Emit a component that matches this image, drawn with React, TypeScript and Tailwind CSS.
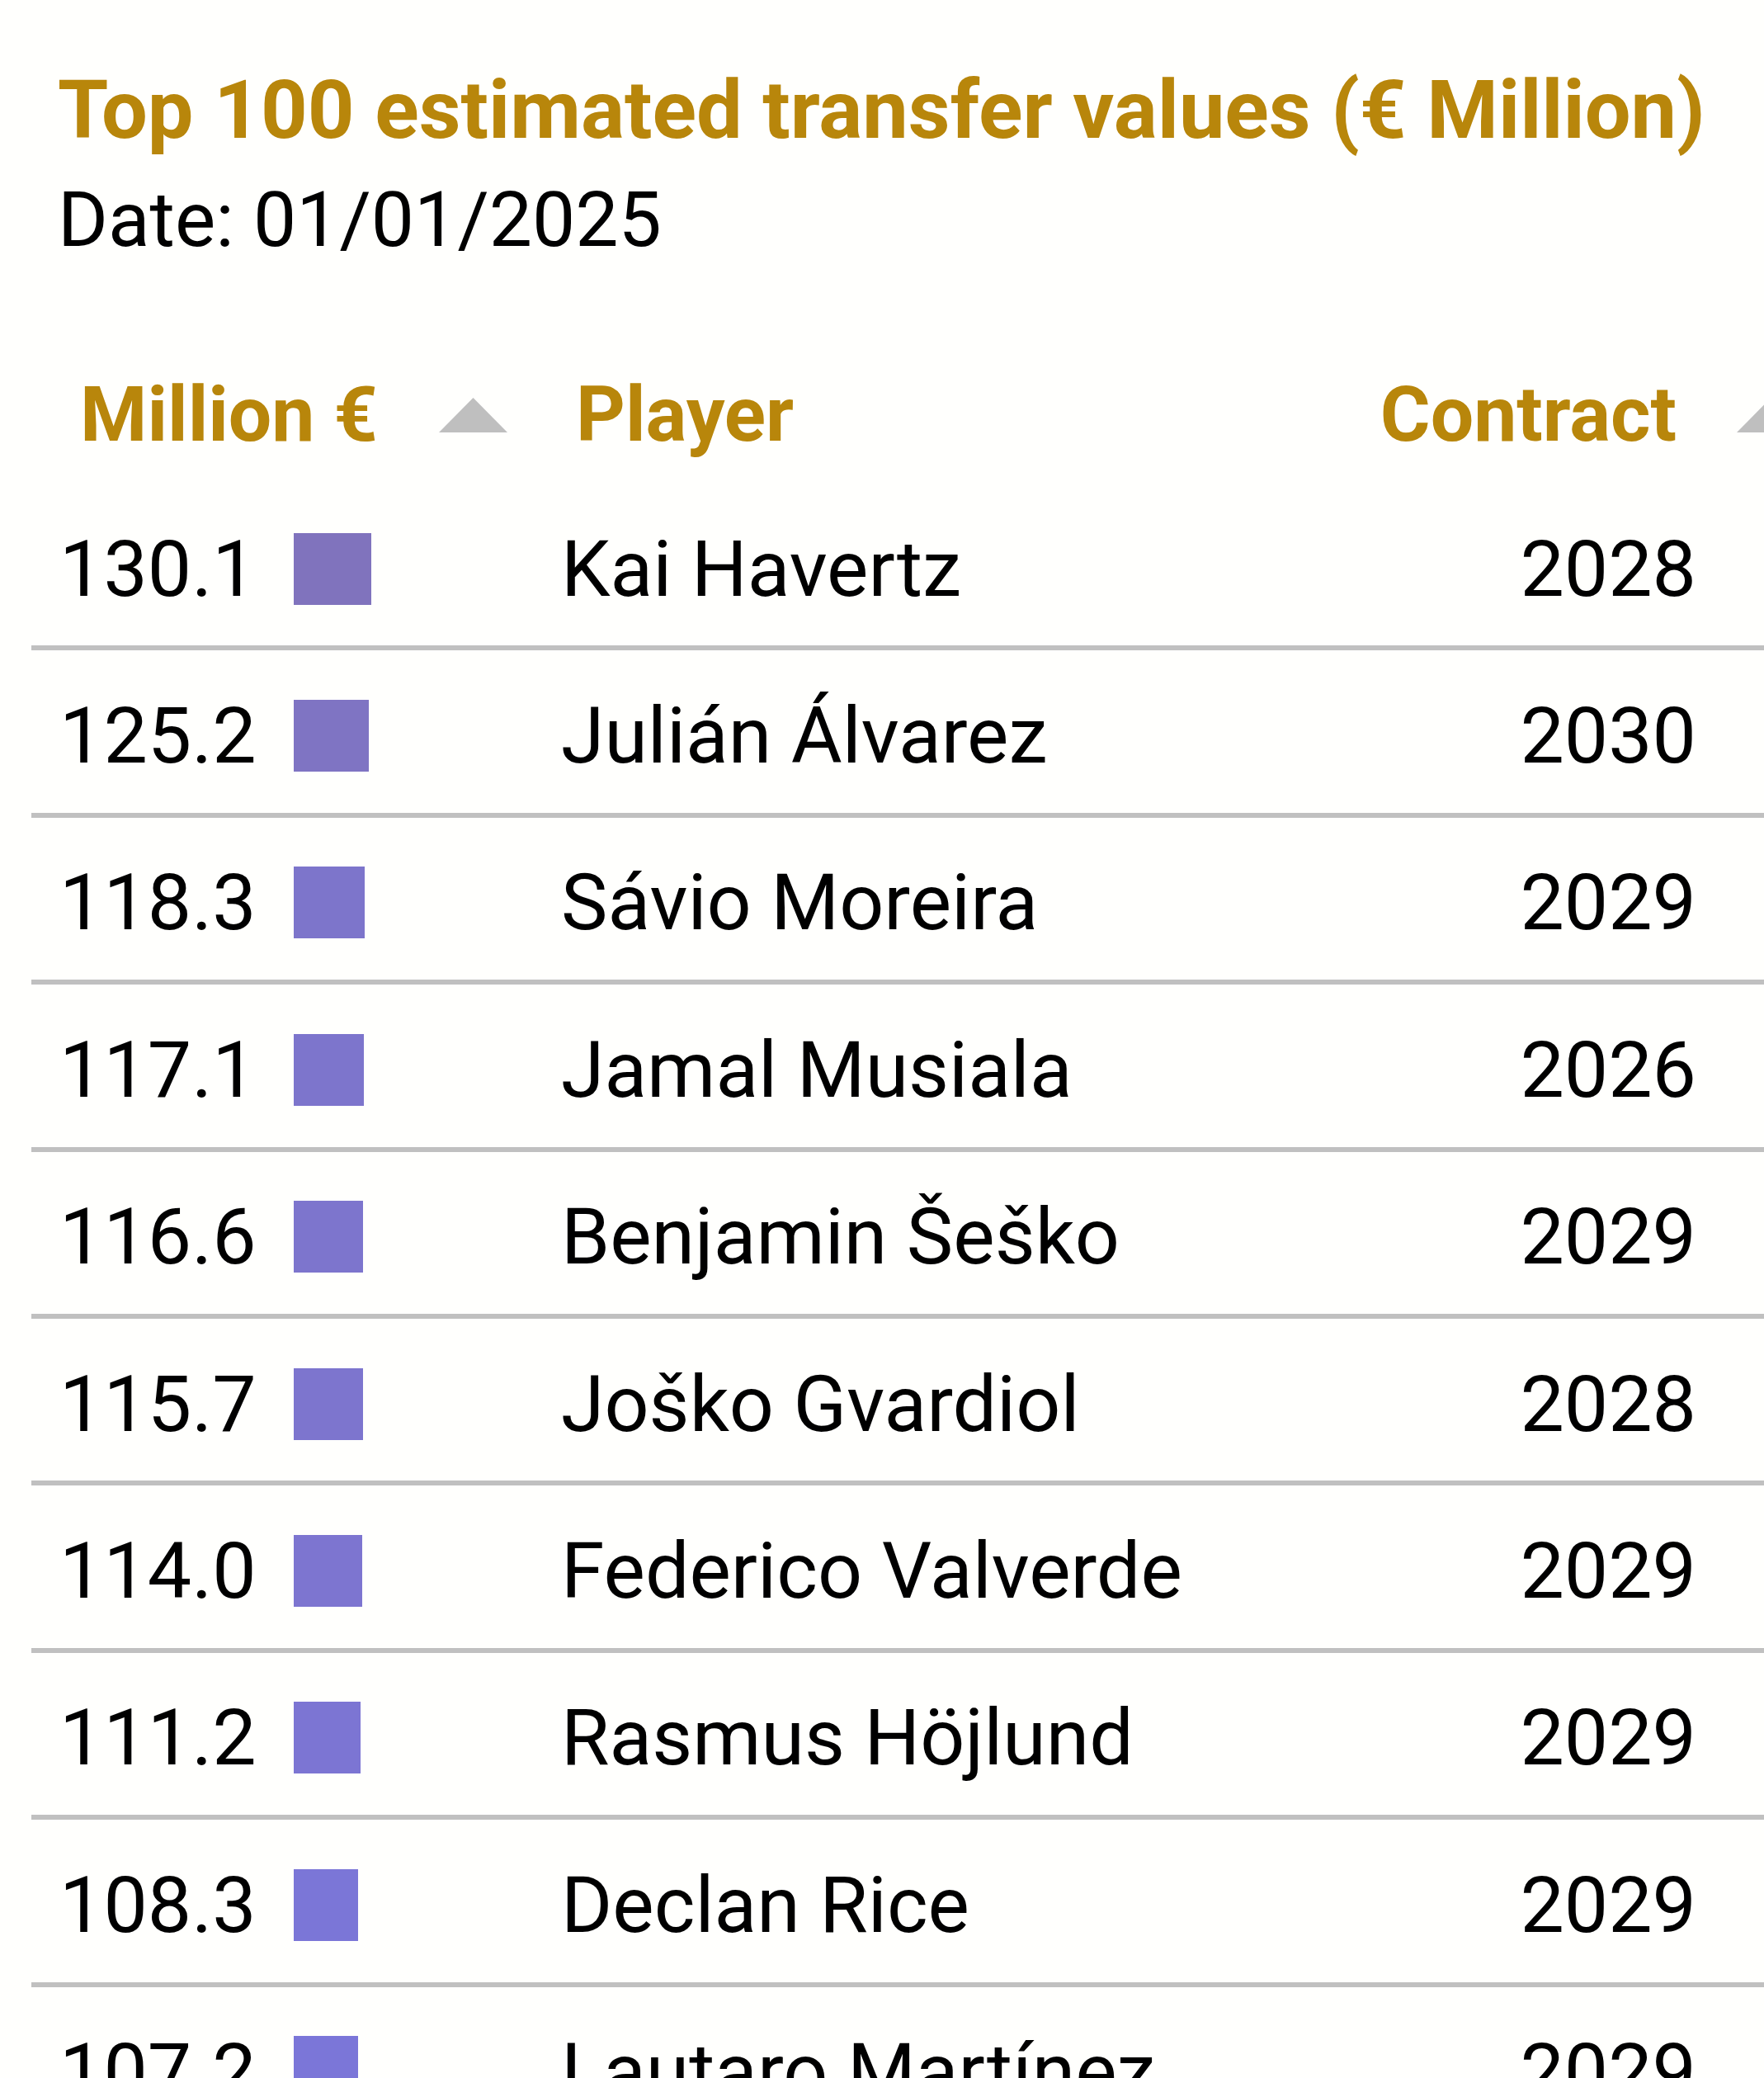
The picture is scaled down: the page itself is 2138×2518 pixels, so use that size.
import React from "react";

interface Row {
  value: number;
  player: string;
  contract: number;
}

const rows: Row[] = [
  { value: 130.1, player: "Kai Havertz", contract: 2028 },
  { value: 125.2, player: "Julián Álvarez", contract: 2030 },
  { value: 118.3, player: "Sávio Moreira", contract: 2029 },
  { value: 117.1, player: "Jamal Musiala", contract: 2026 },
  { value: 116.6, player: "Benjamin Šeško", contract: 2029 },
  { value: 115.7, player: "Joško Gvardiol", contract: 2028 },
  { value: 114.0, player: "Federico Valverde", contract: 2029 },
  { value: 111.2, player: "Rasmus Höjlund", contract: 2029 },
  { value: 108.3, player: "Declan Rice", contract: 2029 },
  { value: 107.2, player: "Lautaro Martínez", contract: 2029 },
];

// higher values drift toward a greyer purple, lower ones toward lavender
function barColor(v: number) {
  const t = Math.min(1, Math.max(0, (130.1 - v) / 23));
  const mix = (a: number, b: number) => Math.round(a + (b - a) * t);
  return `rgb(${mix(128, 123)}, ${mix(115, 118)}, ${mix(189, 216)})`;
}

function SortArrow() {
  return (
    <svg width="83" height="42" viewBox="0 0 83 42" className="shrink-0">
      <polygon points="0,42 41.5,0 83,42" fill="#bfbfbf" />
    </svg>
  );
}

export default function App() {
  return (
    <div className="w-[2138px] h-[2518px] overflow-hidden bg-[#fffffd] text-black font-['Roboto',sans-serif]">
      <div className="pl-[70px] pt-[73px]">
        <h1 className="text-[99px] leading-[120px] font-bold text-[#b8860b] whitespace-nowrap">
          Top 100 estimated transfer values (€ Million)
        </h1>
        <p className="mt-[18px] text-[93px] leading-[112px]">Date: 01/01/2025</p>
      </div>

      <div className="ml-[38px] w-[2150px] mt-[97px]">
        {/* header */}
        <div className="flex h-[166px] items-center text-[93px] font-bold text-[#b8860b]">
          <div className="flex w-[642px] shrink-0 items-center pl-[59px]">
            <span>Million €</span>
            <span className="ml-[74px]">
              <SortArrow />
            </span>
          </div>
          <div className="flex-1 pl-[18px]">Player</div>
          <div className="flex items-center">
            <span>Contract</span>
            <span className="ml-[73px]">
              <SortArrow />
            </span>
          </div>
        </div>

        {rows.map((r) => (
          <div
            key={r.player}
            className="flex h-[202.4px] items-center border-b-[6px] border-[#c0c0c0] pt-[10px] text-[95px] leading-none"
          >
            <div className="flex w-[642px] shrink-0 items-center pl-[34px]">
              <span className="w-[284px] shrink-0">{r.value.toFixed(1)}</span>
              <div
                className="h-[87px]"
                style={{ width: `${r.value * 0.724}px`, backgroundColor: barColor(r.value) }}
              />
            </div>
            <div className="flex-1 whitespace-nowrap">{r.player}</div>
            <div className="pr-[132px] text-right">{r.contract}</div>
          </div>
        ))}
      </div>
    </div>
  );
}
